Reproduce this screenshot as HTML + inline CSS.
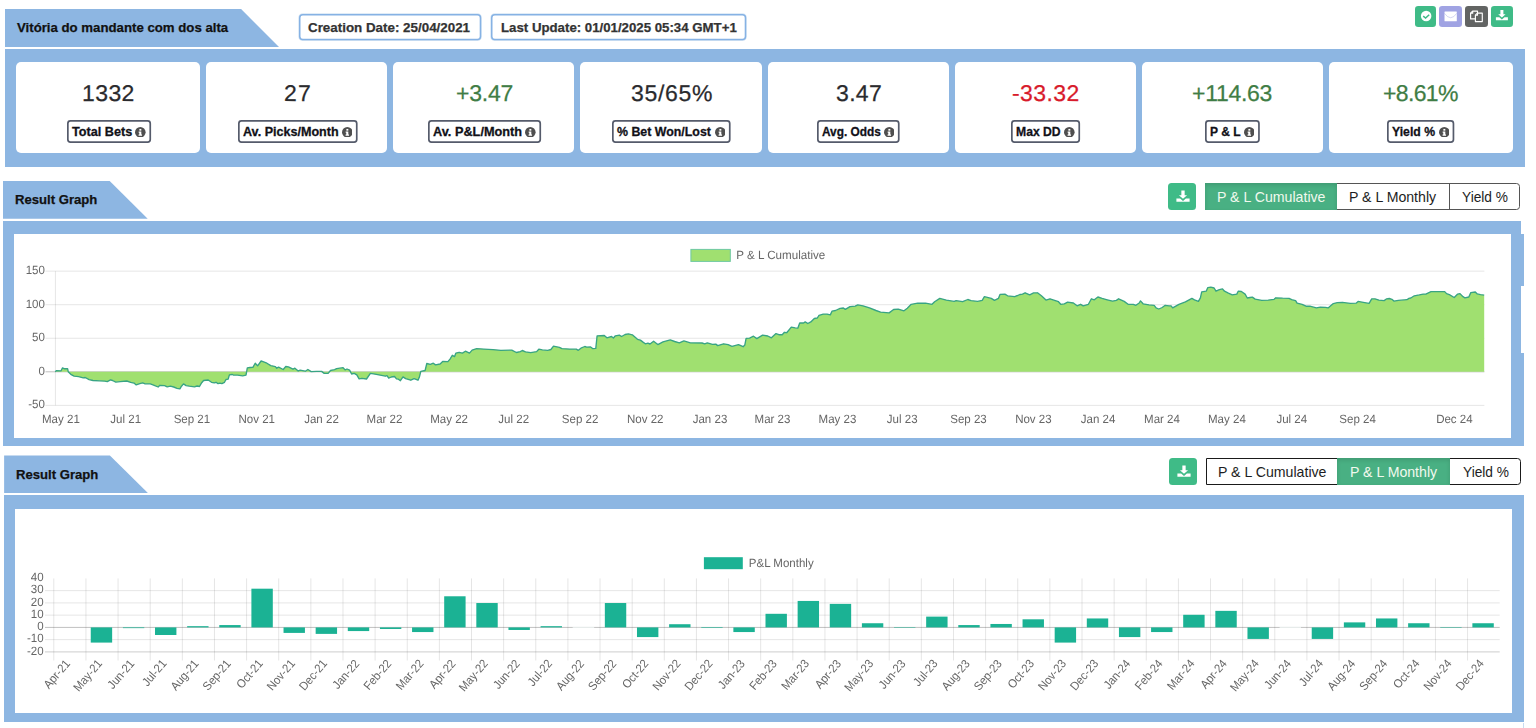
<!DOCTYPE html>
<html lang="pt"><head><meta charset="utf-8"><title>Vitória do mandante com dos alta</title><style>
html,body{margin:0;padding:0}
body{width:1536px;height:728px;position:relative;overflow:hidden;background:#fff;font-family:"Liberation Sans",sans-serif}
.b{position:absolute;background:#8db6e2}
.w{position:absolute;background:#fff}
.t{position:absolute;white-space:nowrap}
.card{position:absolute;background:#fff;border-radius:5px}
.dbox{position:absolute;box-sizing:border-box;border:1.5px solid #8db6e2;border-radius:3.5px;background:#fff}
.lbox{position:absolute;box-sizing:border-box;border:1.9px solid #555b6b;border-radius:3px;background:#fff}
</style></head><body>
<div class="b" style="left:5px;top:8.6px;width:274px;height:38.4px;clip-path:polygon(0 0,235.6px 0,274px 100%,0 100%)"></div>
<div class="t" style="left:17.30px;top:21.16px;font-size:13.4px;line-height:13.4px;font-weight:700;color:#111;letter-spacing:0.000px;transform:rotate(0.02deg) scaleX(0.9865);transform-origin:0 85%;-webkit-text-stroke:0.25px #111;">Vitória do mandante com dos alta</div>
<svg style="position:absolute;left:296.7px;top:11.7px" width="186.2" height="30.2"><rect x="2.75" y="2.75" width="180.70" height="24.70" rx="3" fill="#fff" stroke="#8db6e2" stroke-opacity="0.35" stroke-width="3"/><rect x="2.75" y="2.75" width="180.70" height="24.70" rx="3" fill="#fff" stroke="#86b2e4" stroke-width="1.5"/></svg>
<svg style="position:absolute;left:489px;top:11.7px" width="259.2" height="30.2"><rect x="2.75" y="2.75" width="253.70" height="24.70" rx="3" fill="#fff" stroke="#8db6e2" stroke-opacity="0.35" stroke-width="3"/><rect x="2.75" y="2.75" width="253.70" height="24.70" rx="3" fill="#fff" stroke="#86b2e4" stroke-width="1.5"/></svg>
<div class="t" style="left:308.40px;top:20.56px;font-size:13.4px;line-height:13.4px;font-weight:700;color:#333;letter-spacing:0.000px;transform:rotate(0.02deg) scaleX(0.9987);transform-origin:0 85%;-webkit-text-stroke:0.25px #333;">Creation Date: 25/04/2021</div>
<div class="t" style="left:500.50px;top:20.56px;font-size:13.4px;line-height:13.4px;font-weight:700;color:#333;letter-spacing:0.000px;transform:rotate(0.02deg) scaleX(0.9883);transform-origin:0 85%;-webkit-text-stroke:0.25px #333;">Last Update: 01/01/2025 05:34 GMT+1</div>
<div style="position:absolute;left:1415px;top:5.9px;width:21.1px;height:20.9px;background:#3fbb87;border-radius:3.2px"><svg width="21.1" height="20.9" viewBox="0 0 21.1 20.9" style="position:absolute;left:0;top:0"><circle cx="11.15" cy="10" r="5.25" fill="#fff"/><path d="M8.2 10.1l2.4 1.900l3.600 -3.300" fill="none" stroke="#3fbb87" stroke-width="1.5"/></svg></div>
<div style="position:absolute;left:1439.2px;top:5.9px;width:22.7px;height:20.9px;background:#a0a3e3;border-radius:3.2px"><svg width="22.7" height="20.9" viewBox="0 0 22.7 20.9" style="position:absolute;left:0;top:0"><rect x="5.5" y="5.5" width="12.3" height="9.7" rx="0.5" fill="#fff"/><path d="M5.5 7.300Q11.65 16.200 17.800 7.300" fill="none" stroke="#a0a3e3" stroke-opacity="0.5" stroke-width="0.9"/></svg></div>
<div style="position:absolute;left:1465.1px;top:5.9px;width:22.8px;height:20.9px;background:#626463;border-radius:3.2px"><svg width="22.8" height="20.9" viewBox="0 0 22.8 20.9" style="position:absolute;left:0;top:0"><g fill="#626463" stroke="#fff" stroke-width="1.15" stroke-linejoin="round"><path d="M7.6 5.100H12.500V12.900H5.600V7.100z"/><path d="M7.700 5.100v2.100h-2.100" fill="none"/><path d="M12.400 7.200H17.300V15.600H10.400V9.200z"/><path d="M12.500 7.200v2.100h-2.100" fill="none"/></g></svg></div>
<div style="position:absolute;left:1491px;top:5.9px;width:21.9px;height:20.9px;background:#3fbb87;border-radius:3.2px"><svg width="21.9" height="20.9" viewBox="0 0 21.9 20.9" style="position:absolute;left:0;top:0"><g transform="translate(10.9,9.1) scale(1.0)" fill="#fff"><path d="M-1.500 -5.100h3v4.300h2.200L0 2.500L-3.700 -.8h2.200z"/><path d="M-6 2.100h3.400L0 4.400L2.600 2.100H6v3H-6z"/></g></svg></div>
<div class="b" style="left:5px;top:49.1px;width:1519.7px;height:117.8px"></div>
<div class="card" style="left:16.00px;top:62.1px;width:184.15px;height:91.3px"></div>
<div class="t" style="left:82.40px;top:82.13px;font-size:23px;line-height:23px;font-weight:400;color:#2a2a2d;letter-spacing:0.408px;transform:rotate(0.03deg) scaleY(0.99);transform-origin:50% 84%;-webkit-text-stroke:0.25px #2a2a2d;">1332</div>
<svg style="position:absolute;left:65.95px;top:118.9px" width="86.1" height="25"><rect x="1.85" y="1.85" width="82.40" height="21.3" rx="2.6" fill="#fff" stroke="#555b6b" stroke-width="1.7"/></svg>
<div class="t" style="left:71.95px;top:125.16px;font-size:13.4px;line-height:13.4px;font-weight:700;color:#111118;letter-spacing:0.000px;transform:rotate(0.02deg) scaleX(0.9465);transform-origin:0 85%;-webkit-text-stroke:0.3px #111118;">Total Bets</div>
<svg style="position:absolute;left:135.35px;top:126.7px" width="10.6" height="10.6" viewBox="0 0 10.4 10.4"><circle cx="5.2" cy="5.2" r="5.2" fill="#4f4f4f"/><rect x="4.3" y="1.9" width="1.9" height="1.7" fill="#fff"/><path d="M3.6 4.400h2.600v3h.7v1.200h-3.400v-1.200h.7v-1.800h-.6z" fill="#fff"/></svg>
<div class="card" style="left:206.15px;top:62.1px;width:181.15px;height:91.3px"></div>
<div class="t" style="left:283.90px;top:82.13px;font-size:23px;line-height:23px;font-weight:400;color:#2a2a2d;letter-spacing:1.208px;transform:rotate(0.03deg) scaleY(0.99);transform-origin:50% 84%;-webkit-text-stroke:0.25px #2a2a2d;">27</div>
<svg style="position:absolute;left:236.70px;top:118.9px" width="121.6" height="25"><rect x="1.85" y="1.85" width="117.90" height="21.3" rx="2.6" fill="#fff" stroke="#555b6b" stroke-width="1.7"/></svg>
<div class="t" style="left:242.70px;top:125.16px;font-size:13.4px;line-height:13.4px;font-weight:700;color:#111118;letter-spacing:0.000px;transform:rotate(0.02deg) scaleX(0.9376);transform-origin:0 85%;-webkit-text-stroke:0.3px #111118;">Av. Picks/Month</div>
<svg style="position:absolute;left:341.60px;top:126.7px" width="10.6" height="10.6" viewBox="0 0 10.4 10.4"><circle cx="5.2" cy="5.2" r="5.2" fill="#4f4f4f"/><rect x="4.3" y="1.9" width="1.9" height="1.7" fill="#fff"/><path d="M3.6 4.400h2.600v3h.7v1.200h-3.400v-1.200h.7v-1.800h-.6z" fill="#fff"/></svg>
<div class="card" style="left:393.30px;top:62.1px;width:181.15px;height:91.3px"></div>
<div class="t" style="left:455.65px;top:82.13px;font-size:23px;line-height:23px;font-weight:400;color:#3f7d45;letter-spacing:-0.226px;transform:rotate(0.03deg) scaleY(0.99);transform-origin:50% 84%;-webkit-text-stroke:0.25px #3f7d45;">+3.47</div>
<svg style="position:absolute;left:426.95px;top:118.9px" width="115.1" height="25"><rect x="1.85" y="1.85" width="111.40" height="21.3" rx="2.6" fill="#fff" stroke="#555b6b" stroke-width="1.7"/></svg>
<div class="t" style="left:432.95px;top:125.16px;font-size:13.4px;line-height:13.4px;font-weight:700;color:#111118;letter-spacing:0.000px;transform:rotate(0.02deg) scaleX(0.9504);transform-origin:0 85%;-webkit-text-stroke:0.3px #111118;">Av. P&amp;L/Month</div>
<svg style="position:absolute;left:525.35px;top:126.7px" width="10.6" height="10.6" viewBox="0 0 10.4 10.4"><circle cx="5.2" cy="5.2" r="5.2" fill="#4f4f4f"/><rect x="4.3" y="1.9" width="1.9" height="1.7" fill="#fff"/><path d="M3.6 4.400h2.600v3h.7v1.200h-3.400v-1.200h.7v-1.800h-.6z" fill="#fff"/></svg>
<div class="card" style="left:580.45px;top:62.1px;width:181.15px;height:91.3px"></div>
<div class="t" style="left:630.80px;top:82.13px;font-size:23px;line-height:23px;font-weight:400;color:#2a2a2d;letter-spacing:0.689px;transform:rotate(0.03deg) scaleY(0.99);transform-origin:50% 84%;-webkit-text-stroke:0.25px #2a2a2d;">35/65%</div>
<svg style="position:absolute;left:610.60px;top:118.9px" width="120.6" height="25"><rect x="1.85" y="1.85" width="116.90" height="21.3" rx="2.6" fill="#fff" stroke="#555b6b" stroke-width="1.7"/></svg>
<div class="t" style="left:616.60px;top:125.16px;font-size:13.4px;line-height:13.4px;font-weight:700;color:#111118;letter-spacing:0.000px;transform:rotate(0.02deg) scaleX(0.9236);transform-origin:0 85%;-webkit-text-stroke:0.3px #111118;">% Bet Won/Lost</div>
<svg style="position:absolute;left:714.50px;top:126.7px" width="10.6" height="10.6" viewBox="0 0 10.4 10.4"><circle cx="5.2" cy="5.2" r="5.2" fill="#4f4f4f"/><rect x="4.3" y="1.9" width="1.9" height="1.7" fill="#fff"/><path d="M3.6 4.400h2.600v3h.7v1.200h-3.400v-1.200h.7v-1.800h-.6z" fill="#fff"/></svg>
<div class="card" style="left:767.60px;top:62.1px;width:181.15px;height:91.3px"></div>
<div class="t" style="left:835.60px;top:82.13px;font-size:23px;line-height:23px;font-weight:400;color:#2a2a2d;letter-spacing:0.342px;transform:rotate(0.03deg) scaleY(0.99);transform-origin:50% 84%;-webkit-text-stroke:0.25px #2a2a2d;">3.47</div>
<svg style="position:absolute;left:815.90px;top:118.9px" width="84.6" height="25"><rect x="1.85" y="1.85" width="80.90" height="21.3" rx="2.6" fill="#fff" stroke="#555b6b" stroke-width="1.7"/></svg>
<div class="t" style="left:821.90px;top:125.16px;font-size:13.4px;line-height:13.4px;font-weight:700;color:#111118;letter-spacing:0.000px;transform:rotate(0.02deg) scaleX(0.8846);transform-origin:0 85%;-webkit-text-stroke:0.3px #111118;">Avg. Odds</div>
<svg style="position:absolute;left:883.80px;top:126.7px" width="10.6" height="10.6" viewBox="0 0 10.4 10.4"><circle cx="5.2" cy="5.2" r="5.2" fill="#4f4f4f"/><rect x="4.3" y="1.9" width="1.9" height="1.7" fill="#fff"/><path d="M3.6 4.400h2.600v3h.7v1.200h-3.400v-1.200h.7v-1.800h-.6z" fill="#fff"/></svg>
<div class="card" style="left:954.75px;top:62.1px;width:181.15px;height:91.3px"></div>
<div class="t" style="left:1011.85px;top:82.13px;font-size:23px;line-height:23px;font-weight:400;color:#d81b2b;letter-spacing:0.415px;transform:rotate(0.03deg) scaleY(0.99);transform-origin:50% 84%;-webkit-text-stroke:0.25px #d81b2b;">-33.32</div>
<svg style="position:absolute;left:1009.75px;top:118.9px" width="71.1" height="25"><rect x="1.85" y="1.85" width="67.40" height="21.3" rx="2.6" fill="#fff" stroke="#555b6b" stroke-width="1.7"/></svg>
<div class="t" style="left:1015.75px;top:125.16px;font-size:13.4px;line-height:13.4px;font-weight:700;color:#111118;letter-spacing:0.000px;transform:rotate(0.02deg) scaleX(0.9082);transform-origin:0 85%;-webkit-text-stroke:0.3px #111118;">Max DD</div>
<svg style="position:absolute;left:1064.15px;top:126.7px" width="10.6" height="10.6" viewBox="0 0 10.4 10.4"><circle cx="5.2" cy="5.2" r="5.2" fill="#4f4f4f"/><rect x="4.3" y="1.9" width="1.9" height="1.7" fill="#fff"/><path d="M3.6 4.400h2.600v3h.7v1.200h-3.400v-1.200h.7v-1.800h-.6z" fill="#fff"/></svg>
<div class="card" style="left:1141.90px;top:62.1px;width:181.15px;height:91.3px"></div>
<div class="t" style="left:1191.95px;top:82.13px;font-size:23px;line-height:23px;font-weight:400;color:#3f7d45;letter-spacing:-0.297px;transform:rotate(0.03deg) scaleY(0.99);transform-origin:50% 84%;-webkit-text-stroke:0.25px #3f7d45;">+114.63</div>
<svg style="position:absolute;left:1203.70px;top:118.9px" width="56.800000000000004" height="25"><rect x="1.85" y="1.85" width="53.10" height="21.3" rx="2.6" fill="#fff" stroke="#555b6b" stroke-width="1.7"/></svg>
<div class="t" style="left:1209.70px;top:125.16px;font-size:13.4px;line-height:13.4px;font-weight:700;color:#111118;letter-spacing:0.000px;transform:rotate(0.02deg) scaleX(0.8989);transform-origin:0 85%;-webkit-text-stroke:0.3px #111118;">P &amp; L</div>
<svg style="position:absolute;left:1243.80px;top:126.7px" width="10.6" height="10.6" viewBox="0 0 10.4 10.4"><circle cx="5.2" cy="5.2" r="5.2" fill="#4f4f4f"/><rect x="4.3" y="1.9" width="1.9" height="1.7" fill="#fff"/><path d="M3.6 4.400h2.600v3h.7v1.200h-3.400v-1.200h.7v-1.800h-.6z" fill="#fff"/></svg>
<div class="card" style="left:1329.05px;top:62.1px;width:184.15px;height:91.3px"></div>
<div class="t" style="left:1382.90px;top:82.13px;font-size:23px;line-height:23px;font-weight:400;color:#3f7d45;letter-spacing:-0.639px;transform:rotate(0.03deg) scaleY(0.99);transform-origin:50% 84%;-webkit-text-stroke:0.25px #3f7d45;">+8.61%</div>
<svg style="position:absolute;left:1386.05px;top:118.9px" width="69.3" height="25"><rect x="1.85" y="1.85" width="65.60" height="21.3" rx="2.6" fill="#fff" stroke="#555b6b" stroke-width="1.7"/></svg>
<div class="t" style="left:1392.05px;top:125.16px;font-size:13.4px;line-height:13.4px;font-weight:700;color:#111118;letter-spacing:0.000px;transform:rotate(0.02deg) scaleX(0.9127);transform-origin:0 85%;-webkit-text-stroke:0.3px #111118;">Yield %</div>
<svg style="position:absolute;left:1438.65px;top:126.7px" width="10.6" height="10.6" viewBox="0 0 10.4 10.4"><circle cx="5.2" cy="5.2" r="5.2" fill="#4f4f4f"/><rect x="4.3" y="1.9" width="1.9" height="1.7" fill="#fff"/><path d="M3.6 4.400h2.600v3h.7v1.200h-3.400v-1.200h.7v-1.800h-.6z" fill="#fff"/></svg>
<div class="b" style="left:3px;top:180.6px;width:144.7px;height:38.2px;clip-path:polygon(0 0,106.2px 0,144.7px 100%,0 100%)"></div>
<div class="t" style="left:15.10px;top:193.06px;font-size:13.4px;line-height:13.4px;font-weight:700;color:#111;letter-spacing:0.000px;transform:rotate(0.02deg) scaleX(0.9786);transform-origin:0 85%;-webkit-text-stroke:0.25px #111;">Result Graph</div>
<div class="b" style="left:3px;top:221.1px;width:1518.3px;height:225.0px"></div>
<div class="w" style="left:14.1px;top:234.1px;width:1497.2px;height:203.8px"></div>
<div class="b" style="left:1521.2px;top:233.5px;width:3.3px;height:52.4px"></div>
<div class="b" style="left:1521.2px;top:353.3px;width:3.3px;height:92.8px"></div>
<div class="b" style="left:4.1px;top:455.4px;width:144.3px;height:38.1px;clip-path:polygon(0 0,105.8px 0,144.3px 100%,0 100%)"></div>
<div class="t" style="left:16.20px;top:467.86px;font-size:13.4px;line-height:13.4px;font-weight:700;color:#111;letter-spacing:0.000px;transform:rotate(0.02deg) scaleX(0.9786);transform-origin:0 85%;-webkit-text-stroke:0.25px #111;">Result Graph</div>
<div class="b" style="left:4.1px;top:495.4px;width:1519.5px;height:226.4px"></div>
<div class="w" style="left:15.4px;top:509px;width:1496.6px;height:203.5px"></div>
<div style="position:absolute;left:1523px;top:722.5px;width:1.2px;height:6px;background:#c9dcf1"></div>
<div style="position:absolute;left:1168.1px;top:183.1px;width:28px;height:27.2px;background:#3fbb87;border-radius:3.5px"><svg width="28" height="27" viewBox="0 0 28 27" style="position:absolute;left:0;top:0"><g transform="translate(15.0,13.1) scale(1.1)" fill="#fff"><path d="M-1.500 -5.100h3v4.300h2.200L0 2.500L-3.700 -.8h2.200z"/><path d="M-6 2.100h3.400L0 4.400L2.600 2.100H6v3H-6z"/></g></svg></div>
<div style="position:absolute;left:1204.9px;top:183.4px;width:314.8px;height:26.4px;border:1px solid #555;box-sizing:border-box;border-radius:0 3.5px 3.5px 0;background:#fff"></div>
<div style="position:absolute;left:1204.9px;top:183.1px;width:132.3px;height:27.0px;background:#49b083;box-shadow:inset 0 2px 4px rgba(0,0,0,.13)"></div>
<div style="position:absolute;left:1448.9px;top:183.4px;width:1px;height:26.4px;background:#555"></div>
<div class="t" style="left:1217.26px;top:189.30px;font-size:15px;line-height:15px;font-weight:400;color:#f1f9ee;letter-spacing:0.000px;transform:rotate(0.02deg) scaleX(0.9429);transform-origin:0 85%;">P &amp; L Cumulative</div>
<div class="t" style="left:1348.56px;top:189.30px;font-size:15px;line-height:15px;font-weight:400;color:#1d1d22;letter-spacing:0.000px;transform:rotate(0.02deg) scaleX(0.9410);transform-origin:0 85%;">P &amp; L Monthly</div>
<div class="t" style="left:1461.50px;top:189.30px;font-size:15px;line-height:15px;font-weight:400;color:#1d1d22;letter-spacing:0.000px;transform:rotate(0.02deg) scaleX(0.9146);transform-origin:0 85%;">Yield %</div>
<div style="position:absolute;left:1169.1px;top:457.9px;width:28px;height:27.4px;background:#3fbb87;border-radius:3.5px"><svg width="28" height="27" viewBox="0 0 28 27" style="position:absolute;left:0;top:0"><g transform="translate(15.0,13.1) scale(1.1)" fill="#fff"><path d="M-1.500 -5.100h3v4.300h2.200L0 2.500L-3.700 -.8h2.200z"/><path d="M-6 2.100h3.400L0 4.400L2.600 2.100H6v3H-6z"/></g></svg></div>
<div style="position:absolute;left:1205.7px;top:458.2px;width:315.1px;height:26.6px;border:1px solid #1a1a1a;box-sizing:border-box;border-radius:0 3.5px 3.5px 0;background:#fff"></div>
<div style="position:absolute;left:1337.2px;top:457.9px;width:113.1px;height:27.2px;background:#49b083;box-shadow:inset 0 2px 4px rgba(0,0,0,.13)"></div>
<div class="t" style="left:1218.36px;top:464.10px;font-size:15px;line-height:15px;font-weight:400;color:#1d1d22;letter-spacing:0.000px;transform:rotate(0.02deg) scaleX(0.9429);transform-origin:0 85%;">P &amp; L Cumulative</div>
<div class="t" style="left:1349.66px;top:464.10px;font-size:15px;line-height:15px;font-weight:400;color:#f1f9ee;letter-spacing:0.000px;transform:rotate(0.02deg) scaleX(0.9410);transform-origin:0 85%;">P &amp; L Monthly</div>
<div class="t" style="left:1462.60px;top:464.10px;font-size:15px;line-height:15px;font-weight:400;color:#1d1d22;letter-spacing:0.000px;transform:rotate(0.02deg) scaleX(0.9146);transform-origin:0 85%;">Yield %</div>
<svg style="position:absolute;left:0;top:0;will-change:transform" width="1536" height="728" viewBox="0 0 1536 728" font-family="Liberation Sans, sans-serif" font-size="12" fill="#666" text-rendering="geometricPrecision">
<rect x="45.5" y="270.65" width="1438.9" height="1" fill="rgba(0,0,0,0.1)"/>
<text transform="translate(44.90,274.05) scale(0.96,1)" text-anchor="end">150</text>
<rect x="45.5" y="304.20" width="1438.9" height="1" fill="rgba(0,0,0,0.1)"/>
<text transform="translate(44.90,307.60) scale(0.96,1)" text-anchor="end">100</text>
<rect x="45.5" y="337.75" width="1438.9" height="1" fill="rgba(0,0,0,0.1)"/>
<text transform="translate(44.90,341.15) scale(0.96,1)" text-anchor="end">50</text>
<rect x="45.5" y="371.30" width="1438.9" height="1" fill="rgba(0,0,0,0.25)"/>
<text transform="translate(44.90,374.70) scale(0.96,1)" text-anchor="end">0</text>
<rect x="45.5" y="404.85" width="1438.9" height="1" fill="rgba(0,0,0,0.1)"/>
<text transform="translate(44.90,408.25) scale(0.96,1)" text-anchor="end">-50</text>
<rect x="54.9" y="271.15" width="1" height="134.20" fill="rgba(0,0,0,0.1)"/>
<path d="M55.2 371.7 L56.5 370.6 L61.1 370.8 L62.4 368.0 L64.3 368.7 L67.6 368.7 L68.2 371.7 L70.8 374.3 L74.1 376.2 L78.6 376.6 L83.2 377.9 L85.2 377.5 L89.1 379.7 L93.0 380.5 L99.5 380.8 L104.7 381.2 L107.3 381.6 L110.5 379.9 L112.5 380.5 L115.8 382.1 L120.3 381.6 L126.8 381.0 L130.7 382.3 L134.0 383.1 L136.2 384.9 L139.8 383.6 L142.7 382.9 L145.1 383.8 L150.3 383.9 L154.2 385.3 L158.1 387.0 L160.0 385.3 L164.6 385.7 L167.2 386.9 L170.4 386.2 L173.7 387.0 L177.0 388.3 L179.9 388.9 L181.5 386.2 L183.5 383.9 L186.1 385.6 L189.3 386.2 L194.5 386.8 L197.1 386.0 L199.5 386.5 L201.7 382.7 L203.6 380.5 L208.2 380.0 L211.5 382.3 L214.3 382.9 L216.0 382.3 L218.0 383.6 L219.9 383.1 L221.9 383.6 L224.5 382.3 L226.0 379.5 L228.1 379.2 L229.4 374.9 L232.3 374.5 L233.6 375.1 L237.5 375.1 L242.7 375.8 L246.0 375.1 L247.3 367.8 L250.0 367.5 L252.9 367.4 L255.2 363.2 L257.6 365.8 L261.1 361.0 L263.0 361.7 L266.9 363.2 L270.8 365.6 L275.4 366.6 L276.7 368.2 L278.6 367.1 L283.2 369.5 L285.8 366.5 L288.4 366.9 L293.0 369.2 L294.9 368.2 L298.2 371.0 L300.1 370.1 L305.3 371.2 L307.9 369.5 L311.2 371.6 L316.4 371.4 L321.6 371.4 L324.2 373.4 L328.1 373.4 L330.5 370.5 L334.6 369.7 L336.6 368.7 L343.1 367.7 L345.1 369.9 L347.0 369.0 L349.6 370.1 L351.6 374.0 L354.2 373.4 L356.8 374.9 L359.1 378.9 L362.0 378.3 L366.5 379.0 L370.4 373.4 L375.0 374.2 L380.2 375.2 L385.4 376.2 L387.0 375.6 L388.7 378.1 L391.3 377.0 L394.5 376.5 L396.5 378.9 L398.4 379.2 L400.4 380.7 L403.0 376.9 L405.6 378.6 L410.8 380.2 L414.1 378.6 L418.0 380.2 L419.3 377.3 L420.8 371.4 L425.1 370.5 L426.8 363.5 L430.3 364.3 L433.3 363.2 L435.5 364.9 L440.1 364.0 L442.7 361.4 L447.9 361.7 L450.0 359.1 L452.3 355.3 L454.6 356.6 L455.9 353.1 L459.1 352.3 L462.4 353.1 L465.4 351.2 L469.5 353.1 L472.1 350.1 L476.7 348.6 L483.9 349.1 L493.0 349.6 L500.8 350.3 L511.8 350.1 L516.4 352.5 L520.3 351.6 L522.3 350.5 L525.5 351.8 L530.7 352.6 L536.6 351.6 L538.8 349.2 L542.4 349.9 L547.7 350.4 L550.9 349.5 L553.5 346.2 L559.4 347.3 L562.0 348.6 L569.8 349.1 L576.3 349.2 L578.3 350.3 L580.9 348.2 L584.8 346.5 L586.7 347.1 L590.6 346.9 L592.6 348.6 L595.8 348.4 L597.1 335.8 L604.3 335.5 L606.9 337.8 L611.5 336.5 L613.4 338.0 L615.4 335.8 L619.3 335.2 L621.6 336.5 L625.1 334.5 L628.4 333.9 L632.3 334.8 L634.9 337.1 L637.5 339.3 L640.4 340.1 L642.7 341.9 L645.3 343.8 L647.9 343.2 L650.0 344.0 L653.6 341.2 L657.8 344.6 L663.0 341.8 L670.2 339.9 L674.7 341.5 L679.3 342.8 L683.9 340.9 L690.4 342.9 L702.1 343.0 L704.7 343.8 L707.3 342.9 L712.5 344.3 L715.8 344.1 L717.7 345.6 L723.6 343.8 L728.1 344.7 L732.0 346.4 L738.5 344.6 L743.1 346.7 L744.8 345.1 L746.1 338.3 L749.6 338.1 L753.5 336.2 L756.8 338.6 L762.6 335.2 L767.8 336.0 L771.4 337.8 L776.0 333.6 L778.9 334.7 L782.2 334.7 L784.4 332.3 L786.7 332.7 L791.3 327.1 L795.2 327.9 L797.8 328.2 L799.7 323.0 L803.6 323.0 L805.2 321.9 L807.8 323.5 L810.8 321.9 L814.3 318.5 L817.3 318.0 L819.0 315.4 L823.2 314.1 L827.1 314.1 L830.3 314.9 L832.0 311.2 L835.5 310.5 L840.1 308.4 L843.4 308.0 L845.3 309.4 L850.0 306.6 L855.2 306.1 L857.8 304.9 L863.0 305.8 L869.5 307.9 L876.0 310.5 L880.6 312.1 L889.1 312.9 L893.6 309.5 L898.2 309.1 L904.0 310.8 L907.3 308.2 L911.2 304.3 L917.7 303.2 L925.5 303.2 L932.0 304.3 L934.6 301.7 L939.8 298.4 L946.4 300.1 L954.2 301.4 L956.1 300.6 L962.6 301.7 L967.8 299.5 L971.1 300.6 L977.6 301.4 L982.2 300.4 L984.4 296.7 L991.3 298.4 L994.5 300.4 L998.4 298.4 L1000.0 294.4 L1004.9 294.1 L1007.6 295.8 L1014.7 296.7 L1019.9 294.5 L1022.5 294.1 L1025.1 292.8 L1029.7 294.9 L1033.6 292.9 L1037.5 292.8 L1041.4 295.8 L1046.0 300.1 L1050.0 298.8 L1054.6 300.4 L1058.5 301.7 L1060.7 304.3 L1064.3 303.8 L1067.6 302.2 L1073.4 303.0 L1077.1 305.8 L1080.6 304.3 L1083.2 305.8 L1088.4 304.3 L1091.4 298.8 L1094.3 299.8 L1097.9 297.0 L1102.1 298.4 L1107.3 299.8 L1112.5 301.1 L1116.4 300.4 L1118.6 298.8 L1124.2 301.4 L1128.1 304.3 L1133.3 304.3 L1135.9 305.3 L1139.2 303.0 L1140.5 300.9 L1143.1 303.8 L1149.0 304.9 L1154.2 305.3 L1156.1 307.9 L1158.7 309.0 L1162.2 307.5 L1165.2 305.3 L1169.1 305.8 L1171.1 305.8 L1172.7 307.9 L1178.9 304.3 L1185.4 301.9 L1191.9 298.4 L1194.5 299.8 L1198.4 301.4 L1200.4 297.8 L1201.7 291.9 L1206.2 291.2 L1207.8 287.6 L1210.8 287.1 L1214.1 288.0 L1216.0 291.2 L1219.3 289.7 L1222.5 288.9 L1224.5 291.2 L1228.4 293.2 L1232.3 294.9 L1236.8 294.1 L1238.2 291.2 L1241.4 291.5 L1245.1 294.1 L1247.3 298.0 L1250.0 297.5 L1252.3 297.1 L1255.2 299.1 L1261.7 300.4 L1268.2 300.1 L1274.1 299.3 L1275.8 297.8 L1282.6 298.2 L1289.1 298.4 L1291.7 299.7 L1295.6 300.6 L1297.1 303.2 L1302.1 304.3 L1306.0 306.2 L1309.9 306.2 L1316.4 307.9 L1320.3 307.1 L1325.5 307.3 L1328.1 307.9 L1333.3 303.6 L1337.2 302.7 L1342.4 302.3 L1350.3 303.4 L1356.1 303.2 L1358.1 301.4 L1363.3 302.3 L1369.1 303.4 L1371.7 298.8 L1375.0 298.8 L1378.9 300.1 L1384.1 300.6 L1386.7 298.8 L1389.3 298.5 L1391.9 299.3 L1393.9 301.1 L1398.4 300.4 L1406.9 299.7 L1408.9 298.4 L1410.8 298.0 L1414.3 295.8 L1419.3 294.9 L1423.2 294.1 L1425.8 294.1 L1431.0 291.6 L1438.8 291.6 L1444.7 291.6 L1446.6 293.6 L1450.0 294.9 L1450.6 295.4 L1454.2 297.5 L1457.7 294.1 L1460.0 293.6 L1463.0 296.7 L1464.9 297.8 L1468.8 297.0 L1470.8 292.6 L1475.3 292.0 L1477.3 293.9 L1480.5 294.6 L1484.2 295.2 L1484.2 371.8 L55.2 371.8 Z" fill="#a0e070"/>
<path d="M55.2 371.7 L56.5 370.6 L61.1 370.8 L62.4 368.0 L64.3 368.7 L67.6 368.7 L68.2 371.7 L70.8 374.3 L74.1 376.2 L78.6 376.6 L83.2 377.9 L85.2 377.5 L89.1 379.7 L93.0 380.5 L99.5 380.8 L104.7 381.2 L107.3 381.6 L110.5 379.9 L112.5 380.5 L115.8 382.1 L120.3 381.6 L126.8 381.0 L130.7 382.3 L134.0 383.1 L136.2 384.9 L139.8 383.6 L142.7 382.9 L145.1 383.8 L150.3 383.9 L154.2 385.3 L158.1 387.0 L160.0 385.3 L164.6 385.7 L167.2 386.9 L170.4 386.2 L173.7 387.0 L177.0 388.3 L179.9 388.9 L181.5 386.2 L183.5 383.9 L186.1 385.6 L189.3 386.2 L194.5 386.8 L197.1 386.0 L199.5 386.5 L201.7 382.7 L203.6 380.5 L208.2 380.0 L211.5 382.3 L214.3 382.9 L216.0 382.3 L218.0 383.6 L219.9 383.1 L221.9 383.6 L224.5 382.3 L226.0 379.5 L228.1 379.2 L229.4 374.9 L232.3 374.5 L233.6 375.1 L237.5 375.1 L242.7 375.8 L246.0 375.1 L247.3 367.8 L250.0 367.5 L252.9 367.4 L255.2 363.2 L257.6 365.8 L261.1 361.0 L263.0 361.7 L266.9 363.2 L270.8 365.6 L275.4 366.6 L276.7 368.2 L278.6 367.1 L283.2 369.5 L285.8 366.5 L288.4 366.9 L293.0 369.2 L294.9 368.2 L298.2 371.0 L300.1 370.1 L305.3 371.2 L307.9 369.5 L311.2 371.6 L316.4 371.4 L321.6 371.4 L324.2 373.4 L328.1 373.4 L330.5 370.5 L334.6 369.7 L336.6 368.7 L343.1 367.7 L345.1 369.9 L347.0 369.0 L349.6 370.1 L351.6 374.0 L354.2 373.4 L356.8 374.9 L359.1 378.9 L362.0 378.3 L366.5 379.0 L370.4 373.4 L375.0 374.2 L380.2 375.2 L385.4 376.2 L387.0 375.6 L388.7 378.1 L391.3 377.0 L394.5 376.5 L396.5 378.9 L398.4 379.2 L400.4 380.7 L403.0 376.9 L405.6 378.6 L410.8 380.2 L414.1 378.6 L418.0 380.2 L419.3 377.3 L420.8 371.4 L425.1 370.5 L426.8 363.5 L430.3 364.3 L433.3 363.2 L435.5 364.9 L440.1 364.0 L442.7 361.4 L447.9 361.7 L450.0 359.1 L452.3 355.3 L454.6 356.6 L455.9 353.1 L459.1 352.3 L462.4 353.1 L465.4 351.2 L469.5 353.1 L472.1 350.1 L476.7 348.6 L483.9 349.1 L493.0 349.6 L500.8 350.3 L511.8 350.1 L516.4 352.5 L520.3 351.6 L522.3 350.5 L525.5 351.8 L530.7 352.6 L536.6 351.6 L538.8 349.2 L542.4 349.9 L547.7 350.4 L550.9 349.5 L553.5 346.2 L559.4 347.3 L562.0 348.6 L569.8 349.1 L576.3 349.2 L578.3 350.3 L580.9 348.2 L584.8 346.5 L586.7 347.1 L590.6 346.9 L592.6 348.6 L595.8 348.4 L597.1 335.8 L604.3 335.5 L606.9 337.8 L611.5 336.5 L613.4 338.0 L615.4 335.8 L619.3 335.2 L621.6 336.5 L625.1 334.5 L628.4 333.9 L632.3 334.8 L634.9 337.1 L637.5 339.3 L640.4 340.1 L642.7 341.9 L645.3 343.8 L647.9 343.2 L650.0 344.0 L653.6 341.2 L657.8 344.6 L663.0 341.8 L670.2 339.9 L674.7 341.5 L679.3 342.8 L683.9 340.9 L690.4 342.9 L702.1 343.0 L704.7 343.8 L707.3 342.9 L712.5 344.3 L715.8 344.1 L717.7 345.6 L723.6 343.8 L728.1 344.7 L732.0 346.4 L738.5 344.6 L743.1 346.7 L744.8 345.1 L746.1 338.3 L749.6 338.1 L753.5 336.2 L756.8 338.6 L762.6 335.2 L767.8 336.0 L771.4 337.8 L776.0 333.6 L778.9 334.7 L782.2 334.7 L784.4 332.3 L786.7 332.7 L791.3 327.1 L795.2 327.9 L797.8 328.2 L799.7 323.0 L803.6 323.0 L805.2 321.9 L807.8 323.5 L810.8 321.9 L814.3 318.5 L817.3 318.0 L819.0 315.4 L823.2 314.1 L827.1 314.1 L830.3 314.9 L832.0 311.2 L835.5 310.5 L840.1 308.4 L843.4 308.0 L845.3 309.4 L850.0 306.6 L855.2 306.1 L857.8 304.9 L863.0 305.8 L869.5 307.9 L876.0 310.5 L880.6 312.1 L889.1 312.9 L893.6 309.5 L898.2 309.1 L904.0 310.8 L907.3 308.2 L911.2 304.3 L917.7 303.2 L925.5 303.2 L932.0 304.3 L934.6 301.7 L939.8 298.4 L946.4 300.1 L954.2 301.4 L956.1 300.6 L962.6 301.7 L967.8 299.5 L971.1 300.6 L977.6 301.4 L982.2 300.4 L984.4 296.7 L991.3 298.4 L994.5 300.4 L998.4 298.4 L1000.0 294.4 L1004.9 294.1 L1007.6 295.8 L1014.7 296.7 L1019.9 294.5 L1022.5 294.1 L1025.1 292.8 L1029.7 294.9 L1033.6 292.9 L1037.5 292.8 L1041.4 295.8 L1046.0 300.1 L1050.0 298.8 L1054.6 300.4 L1058.5 301.7 L1060.7 304.3 L1064.3 303.8 L1067.6 302.2 L1073.4 303.0 L1077.1 305.8 L1080.6 304.3 L1083.2 305.8 L1088.4 304.3 L1091.4 298.8 L1094.3 299.8 L1097.9 297.0 L1102.1 298.4 L1107.3 299.8 L1112.5 301.1 L1116.4 300.4 L1118.6 298.8 L1124.2 301.4 L1128.1 304.3 L1133.3 304.3 L1135.9 305.3 L1139.2 303.0 L1140.5 300.9 L1143.1 303.8 L1149.0 304.9 L1154.2 305.3 L1156.1 307.9 L1158.7 309.0 L1162.2 307.5 L1165.2 305.3 L1169.1 305.8 L1171.1 305.8 L1172.7 307.9 L1178.9 304.3 L1185.4 301.9 L1191.9 298.4 L1194.5 299.8 L1198.4 301.4 L1200.4 297.8 L1201.7 291.9 L1206.2 291.2 L1207.8 287.6 L1210.8 287.1 L1214.1 288.0 L1216.0 291.2 L1219.3 289.7 L1222.5 288.9 L1224.5 291.2 L1228.4 293.2 L1232.3 294.9 L1236.8 294.1 L1238.2 291.2 L1241.4 291.5 L1245.1 294.1 L1247.3 298.0 L1250.0 297.5 L1252.3 297.1 L1255.2 299.1 L1261.7 300.4 L1268.2 300.1 L1274.1 299.3 L1275.8 297.8 L1282.6 298.2 L1289.1 298.4 L1291.7 299.7 L1295.6 300.6 L1297.1 303.2 L1302.1 304.3 L1306.0 306.2 L1309.9 306.2 L1316.4 307.9 L1320.3 307.1 L1325.5 307.3 L1328.1 307.9 L1333.3 303.6 L1337.2 302.7 L1342.4 302.3 L1350.3 303.4 L1356.1 303.2 L1358.1 301.4 L1363.3 302.3 L1369.1 303.4 L1371.7 298.8 L1375.0 298.8 L1378.9 300.1 L1384.1 300.6 L1386.7 298.8 L1389.3 298.5 L1391.9 299.3 L1393.9 301.1 L1398.4 300.4 L1406.9 299.7 L1408.9 298.4 L1410.8 298.0 L1414.3 295.8 L1419.3 294.9 L1423.2 294.1 L1425.8 294.1 L1431.0 291.6 L1438.8 291.6 L1444.7 291.6 L1446.6 293.6 L1450.0 294.9 L1450.6 295.4 L1454.2 297.5 L1457.7 294.1 L1460.0 293.6 L1463.0 296.7 L1464.9 297.8 L1468.8 297.0 L1470.8 292.6 L1475.3 292.0 L1477.3 293.9 L1480.5 294.6 L1484.2 295.2" fill="none" stroke="#38a484" stroke-width="1.35" stroke-linejoin="round"/>
<rect x="690.9" y="249.4" width="39.4" height="12" fill="#a0e070" stroke="#6fc9a2" stroke-width="1"/>
<text transform="translate(736.20,258.80) scale(0.968,1)">P &amp; L Cumulative</text>
<text transform="translate(60.90,423.40) scale(0.96,1)" text-anchor="middle">May 21</text>
<text transform="translate(125.70,423.40) scale(0.96,1)" text-anchor="middle">Jul 21</text>
<text transform="translate(191.90,423.40) scale(0.96,1)" text-anchor="middle">Sep 21</text>
<text transform="translate(256.70,423.40) scale(0.96,1)" text-anchor="middle">Nov 21</text>
<text transform="translate(321.50,423.40) scale(0.96,1)" text-anchor="middle">Jan 22</text>
<text transform="translate(384.50,423.40) scale(0.96,1)" text-anchor="middle">Mar 22</text>
<text transform="translate(449.10,423.40) scale(0.96,1)" text-anchor="middle">May 22</text>
<text transform="translate(513.70,423.40) scale(0.96,1)" text-anchor="middle">Jul 22</text>
<text transform="translate(580.10,423.40) scale(0.96,1)" text-anchor="middle">Sep 22</text>
<text transform="translate(645.20,423.40) scale(0.96,1)" text-anchor="middle">Nov 22</text>
<text transform="translate(710.00,423.40) scale(0.96,1)" text-anchor="middle">Jan 23</text>
<text transform="translate(772.50,423.40) scale(0.96,1)" text-anchor="middle">Mar 23</text>
<text transform="translate(837.50,423.40) scale(0.96,1)" text-anchor="middle">May 23</text>
<text transform="translate(902.20,423.40) scale(0.96,1)" text-anchor="middle">Jul 23</text>
<text transform="translate(968.50,423.40) scale(0.96,1)" text-anchor="middle">Sep 23</text>
<text transform="translate(1033.40,423.40) scale(0.96,1)" text-anchor="middle">Nov 23</text>
<text transform="translate(1098.10,423.40) scale(0.96,1)" text-anchor="middle">Jan 24</text>
<text transform="translate(1162.00,423.40) scale(0.96,1)" text-anchor="middle">Mar 24</text>
<text transform="translate(1226.90,423.40) scale(0.96,1)" text-anchor="middle">May 24</text>
<text transform="translate(1291.80,423.40) scale(0.96,1)" text-anchor="middle">Jul 24</text>
<text transform="translate(1357.60,423.40) scale(0.96,1)" text-anchor="middle">Sep 24</text>
<text transform="translate(1454.40,423.40) scale(0.96,1)" text-anchor="middle">Dec 24</text>
<text transform="translate(43.60,581.00) scale(0.96,1)" text-anchor="end">40</text>
<rect x="45" y="590.15" width="1454.7" height="1" fill="rgba(0,0,0,0.1)"/>
<text transform="translate(43.60,593.25) scale(0.96,1)" text-anchor="end">30</text>
<rect x="45" y="602.40" width="1454.7" height="1" fill="rgba(0,0,0,0.1)"/>
<text transform="translate(43.60,605.50) scale(0.96,1)" text-anchor="end">20</text>
<rect x="45" y="614.65" width="1454.7" height="1" fill="rgba(0,0,0,0.1)"/>
<text transform="translate(43.60,617.75) scale(0.96,1)" text-anchor="end">10</text>
<rect x="45" y="626.90" width="1454.7" height="1" fill="rgba(0,0,0,0.25)"/>
<text transform="translate(43.60,630.00) scale(0.96,1)" text-anchor="end">0</text>
<rect x="45" y="639.15" width="1454.7" height="1" fill="rgba(0,0,0,0.1)"/>
<text transform="translate(43.60,642.25) scale(0.96,1)" text-anchor="end">-10</text>
<rect x="45" y="651.40" width="1454.7" height="1" fill="rgba(0,0,0,0.2)"/>
<text transform="translate(43.60,654.50) scale(0.96,1)" text-anchor="end">-20</text>
<rect x="53.30" y="578.40" width="1" height="82.10" fill="rgba(0,0,0,0.1)"/>
<rect x="85.43" y="578.40" width="1" height="82.10" fill="rgba(0,0,0,0.1)"/>
<rect x="117.56" y="578.40" width="1" height="82.10" fill="rgba(0,0,0,0.1)"/>
<rect x="149.69" y="578.40" width="1" height="82.10" fill="rgba(0,0,0,0.1)"/>
<rect x="181.82" y="578.40" width="1" height="82.10" fill="rgba(0,0,0,0.1)"/>
<rect x="213.96" y="578.40" width="1" height="82.10" fill="rgba(0,0,0,0.1)"/>
<rect x="246.09" y="578.40" width="1" height="82.10" fill="rgba(0,0,0,0.1)"/>
<rect x="278.22" y="578.40" width="1" height="82.10" fill="rgba(0,0,0,0.1)"/>
<rect x="310.35" y="578.40" width="1" height="82.10" fill="rgba(0,0,0,0.1)"/>
<rect x="342.48" y="578.40" width="1" height="82.10" fill="rgba(0,0,0,0.1)"/>
<rect x="374.61" y="578.40" width="1" height="82.10" fill="rgba(0,0,0,0.1)"/>
<rect x="406.74" y="578.40" width="1" height="82.10" fill="rgba(0,0,0,0.1)"/>
<rect x="438.87" y="578.40" width="1" height="82.10" fill="rgba(0,0,0,0.1)"/>
<rect x="471.00" y="578.40" width="1" height="82.10" fill="rgba(0,0,0,0.1)"/>
<rect x="503.14" y="578.40" width="1" height="82.10" fill="rgba(0,0,0,0.1)"/>
<rect x="535.27" y="578.40" width="1" height="82.10" fill="rgba(0,0,0,0.1)"/>
<rect x="567.40" y="578.40" width="1" height="82.10" fill="rgba(0,0,0,0.1)"/>
<rect x="599.53" y="578.40" width="1" height="82.10" fill="rgba(0,0,0,0.1)"/>
<rect x="631.66" y="578.40" width="1" height="82.10" fill="rgba(0,0,0,0.1)"/>
<rect x="663.79" y="578.40" width="1" height="82.10" fill="rgba(0,0,0,0.1)"/>
<rect x="695.92" y="578.40" width="1" height="82.10" fill="rgba(0,0,0,0.1)"/>
<rect x="728.05" y="578.40" width="1" height="82.10" fill="rgba(0,0,0,0.1)"/>
<rect x="760.18" y="578.40" width="1" height="82.10" fill="rgba(0,0,0,0.1)"/>
<rect x="792.32" y="578.40" width="1" height="82.10" fill="rgba(0,0,0,0.1)"/>
<rect x="824.45" y="578.40" width="1" height="82.10" fill="rgba(0,0,0,0.1)"/>
<rect x="856.58" y="578.40" width="1" height="82.10" fill="rgba(0,0,0,0.1)"/>
<rect x="888.71" y="578.40" width="1" height="82.10" fill="rgba(0,0,0,0.1)"/>
<rect x="920.84" y="578.40" width="1" height="82.10" fill="rgba(0,0,0,0.1)"/>
<rect x="952.97" y="578.40" width="1" height="82.10" fill="rgba(0,0,0,0.1)"/>
<rect x="985.10" y="578.40" width="1" height="82.10" fill="rgba(0,0,0,0.1)"/>
<rect x="1017.23" y="578.40" width="1" height="82.10" fill="rgba(0,0,0,0.1)"/>
<rect x="1049.36" y="578.40" width="1" height="82.10" fill="rgba(0,0,0,0.1)"/>
<rect x="1081.50" y="578.40" width="1" height="82.10" fill="rgba(0,0,0,0.1)"/>
<rect x="1113.63" y="578.40" width="1" height="82.10" fill="rgba(0,0,0,0.1)"/>
<rect x="1145.76" y="578.40" width="1" height="82.10" fill="rgba(0,0,0,0.1)"/>
<rect x="1177.89" y="578.40" width="1" height="82.10" fill="rgba(0,0,0,0.1)"/>
<rect x="1210.02" y="578.40" width="1" height="82.10" fill="rgba(0,0,0,0.1)"/>
<rect x="1242.15" y="578.40" width="1" height="82.10" fill="rgba(0,0,0,0.1)"/>
<rect x="1274.28" y="578.40" width="1" height="82.10" fill="rgba(0,0,0,0.1)"/>
<rect x="1306.41" y="578.40" width="1" height="82.10" fill="rgba(0,0,0,0.1)"/>
<rect x="1338.54" y="578.40" width="1" height="82.10" fill="rgba(0,0,0,0.1)"/>
<rect x="1370.68" y="578.40" width="1" height="82.10" fill="rgba(0,0,0,0.1)"/>
<rect x="1402.81" y="578.40" width="1" height="82.10" fill="rgba(0,0,0,0.1)"/>
<rect x="1434.94" y="578.40" width="1" height="82.10" fill="rgba(0,0,0,0.1)"/>
<rect x="1467.07" y="578.40" width="1" height="82.10" fill="rgba(0,0,0,0.1)"/>
<rect x="90.75" y="627.40" width="21.4" height="15.19" fill="#1bb294"/>
<rect x="122.88" y="627.40" width="21.4" height="0.73" fill="#1bb294"/>
<rect x="155.01" y="627.40" width="21.4" height="7.59" fill="#1bb294"/>
<rect x="187.14" y="626.17" width="21.4" height="1.23" fill="#1bb294"/>
<rect x="219.27" y="625.07" width="21.4" height="2.33" fill="#1bb294"/>
<rect x="251.40" y="588.69" width="21.4" height="38.71" fill="#1bb294"/>
<rect x="283.53" y="627.40" width="21.4" height="5.51" fill="#1bb294"/>
<rect x="315.66" y="627.40" width="21.4" height="6.49" fill="#1bb294"/>
<rect x="347.80" y="627.40" width="21.4" height="3.67" fill="#1bb294"/>
<rect x="379.93" y="627.40" width="21.4" height="1.59" fill="#1bb294"/>
<rect x="412.06" y="627.40" width="21.4" height="4.66" fill="#1bb294"/>
<rect x="444.19" y="596.28" width="21.4" height="31.12" fill="#1bb294"/>
<rect x="476.32" y="603.02" width="21.4" height="24.38" fill="#1bb294"/>
<rect x="508.45" y="627.40" width="21.4" height="2.57" fill="#1bb294"/>
<rect x="540.58" y="626.17" width="21.4" height="1.23" fill="#1bb294"/>
<rect x="572.71" y="626.80" width="21.4" height="0.90" fill="#f4fbf9"/>
<rect x="604.84" y="603.02" width="21.4" height="24.38" fill="#1bb294"/>
<rect x="636.98" y="627.40" width="21.4" height="9.68" fill="#1bb294"/>
<rect x="669.11" y="624.22" width="21.4" height="3.19" fill="#1bb294"/>
<rect x="701.24" y="627.40" width="21.4" height="0.61" fill="#1bb294"/>
<rect x="733.37" y="627.40" width="21.4" height="4.66" fill="#1bb294"/>
<rect x="765.50" y="613.80" width="21.4" height="13.60" fill="#1bb294"/>
<rect x="797.63" y="600.94" width="21.4" height="26.46" fill="#1bb294"/>
<rect x="829.76" y="603.88" width="21.4" height="23.52" fill="#1bb294"/>
<rect x="861.89" y="623.24" width="21.4" height="4.17" fill="#1bb294"/>
<rect x="894.02" y="627.40" width="21.4" height="0.49" fill="#1bb294"/>
<rect x="926.16" y="616.62" width="21.4" height="10.78" fill="#1bb294"/>
<rect x="958.29" y="625.07" width="21.4" height="2.33" fill="#1bb294"/>
<rect x="990.42" y="623.97" width="21.4" height="3.43" fill="#1bb294"/>
<rect x="1022.55" y="619.31" width="21.4" height="8.08" fill="#1bb294"/>
<rect x="1054.68" y="627.40" width="21.4" height="15.19" fill="#1bb294"/>
<rect x="1086.81" y="618.46" width="21.4" height="8.94" fill="#1bb294"/>
<rect x="1118.94" y="627.40" width="21.4" height="9.68" fill="#1bb294"/>
<rect x="1151.07" y="627.40" width="21.4" height="4.66" fill="#1bb294"/>
<rect x="1183.20" y="614.78" width="21.4" height="12.62" fill="#1bb294"/>
<rect x="1215.34" y="610.86" width="21.4" height="16.54" fill="#1bb294"/>
<rect x="1247.47" y="627.40" width="21.4" height="11.52" fill="#1bb294"/>
<rect x="1279.60" y="626.80" width="21.4" height="0.90" fill="#f4fbf9"/>
<rect x="1311.73" y="627.40" width="21.4" height="11.52" fill="#1bb294"/>
<rect x="1343.86" y="622.38" width="21.4" height="5.02" fill="#1bb294"/>
<rect x="1375.99" y="618.46" width="21.4" height="8.94" fill="#1bb294"/>
<rect x="1408.12" y="623.24" width="21.4" height="4.17" fill="#1bb294"/>
<rect x="1440.25" y="627.40" width="21.4" height="0.49" fill="#1bb294"/>
<rect x="1472.38" y="623.24" width="21.4" height="4.17" fill="#1bb294"/>
<text transform="translate(70.77,663.9) rotate(-49.5) scale(0.93,1)" text-anchor="end">Apr-21</text>
<text transform="translate(102.90,663.9) rotate(-49.5) scale(0.93,1)" text-anchor="end">May-21</text>
<text transform="translate(135.03,663.9) rotate(-49.5) scale(0.93,1)" text-anchor="end">Jun-21</text>
<text transform="translate(167.16,663.9) rotate(-49.5) scale(0.93,1)" text-anchor="end">Jul-21</text>
<text transform="translate(199.29,663.9) rotate(-49.5) scale(0.93,1)" text-anchor="end">Aug-21</text>
<text transform="translate(231.42,663.9) rotate(-49.5) scale(0.93,1)" text-anchor="end">Sep-21</text>
<text transform="translate(263.55,663.9) rotate(-49.5) scale(0.93,1)" text-anchor="end">Oct-21</text>
<text transform="translate(295.68,663.9) rotate(-49.5) scale(0.93,1)" text-anchor="end">Nov-21</text>
<text transform="translate(327.81,663.9) rotate(-49.5) scale(0.93,1)" text-anchor="end">Dec-21</text>
<text transform="translate(359.95,663.9) rotate(-49.5) scale(0.93,1)" text-anchor="end">Jan-22</text>
<text transform="translate(392.08,663.9) rotate(-49.5) scale(0.93,1)" text-anchor="end">Feb-22</text>
<text transform="translate(424.21,663.9) rotate(-49.5) scale(0.93,1)" text-anchor="end">Mar-22</text>
<text transform="translate(456.34,663.9) rotate(-49.5) scale(0.93,1)" text-anchor="end">Apr-22</text>
<text transform="translate(488.47,663.9) rotate(-49.5) scale(0.93,1)" text-anchor="end">May-22</text>
<text transform="translate(520.60,663.9) rotate(-49.5) scale(0.93,1)" text-anchor="end">Jun-22</text>
<text transform="translate(552.73,663.9) rotate(-49.5) scale(0.93,1)" text-anchor="end">Jul-22</text>
<text transform="translate(584.86,663.9) rotate(-49.5) scale(0.93,1)" text-anchor="end">Aug-22</text>
<text transform="translate(616.99,663.9) rotate(-49.5) scale(0.93,1)" text-anchor="end">Sep-22</text>
<text transform="translate(649.13,663.9) rotate(-49.5) scale(0.93,1)" text-anchor="end">Oct-22</text>
<text transform="translate(681.26,663.9) rotate(-49.5) scale(0.93,1)" text-anchor="end">Nov-22</text>
<text transform="translate(713.39,663.9) rotate(-49.5) scale(0.93,1)" text-anchor="end">Dec-22</text>
<text transform="translate(745.52,663.9) rotate(-49.5) scale(0.93,1)" text-anchor="end">Jan-23</text>
<text transform="translate(777.65,663.9) rotate(-49.5) scale(0.93,1)" text-anchor="end">Feb-23</text>
<text transform="translate(809.78,663.9) rotate(-49.5) scale(0.93,1)" text-anchor="end">Mar-23</text>
<text transform="translate(841.91,663.9) rotate(-49.5) scale(0.93,1)" text-anchor="end">Apr-23</text>
<text transform="translate(874.04,663.9) rotate(-49.5) scale(0.93,1)" text-anchor="end">May-23</text>
<text transform="translate(906.17,663.9) rotate(-49.5) scale(0.93,1)" text-anchor="end">Jun-23</text>
<text transform="translate(938.31,663.9) rotate(-49.5) scale(0.93,1)" text-anchor="end">Jul-23</text>
<text transform="translate(970.44,663.9) rotate(-49.5) scale(0.93,1)" text-anchor="end">Aug-23</text>
<text transform="translate(1002.57,663.9) rotate(-49.5) scale(0.93,1)" text-anchor="end">Sep-23</text>
<text transform="translate(1034.70,663.9) rotate(-49.5) scale(0.93,1)" text-anchor="end">Oct-23</text>
<text transform="translate(1066.83,663.9) rotate(-49.5) scale(0.93,1)" text-anchor="end">Nov-23</text>
<text transform="translate(1098.96,663.9) rotate(-49.5) scale(0.93,1)" text-anchor="end">Dec-23</text>
<text transform="translate(1131.09,663.9) rotate(-49.5) scale(0.93,1)" text-anchor="end">Jan-24</text>
<text transform="translate(1163.22,663.9) rotate(-49.5) scale(0.93,1)" text-anchor="end">Feb-24</text>
<text transform="translate(1195.35,663.9) rotate(-49.5) scale(0.93,1)" text-anchor="end">Mar-24</text>
<text transform="translate(1227.49,663.9) rotate(-49.5) scale(0.93,1)" text-anchor="end">Apr-24</text>
<text transform="translate(1259.62,663.9) rotate(-49.5) scale(0.93,1)" text-anchor="end">May-24</text>
<text transform="translate(1291.75,663.9) rotate(-49.5) scale(0.93,1)" text-anchor="end">Jun-24</text>
<text transform="translate(1323.88,663.9) rotate(-49.5) scale(0.93,1)" text-anchor="end">Jul-24</text>
<text transform="translate(1356.01,663.9) rotate(-49.5) scale(0.93,1)" text-anchor="end">Aug-24</text>
<text transform="translate(1388.14,663.9) rotate(-49.5) scale(0.93,1)" text-anchor="end">Sep-24</text>
<text transform="translate(1420.27,663.9) rotate(-49.5) scale(0.93,1)" text-anchor="end">Oct-24</text>
<text transform="translate(1452.40,663.9) rotate(-49.5) scale(0.93,1)" text-anchor="end">Nov-24</text>
<text transform="translate(1484.53,663.9) rotate(-49.5) scale(0.93,1)" text-anchor="end">Dec-24</text>
<rect x="703.9" y="557.2" width="38.9" height="12" fill="#1bb294"/>
<text transform="translate(748.80,566.90) scale(0.96,1)">P&amp;L Monthly</text>
</svg>
</body></html>
